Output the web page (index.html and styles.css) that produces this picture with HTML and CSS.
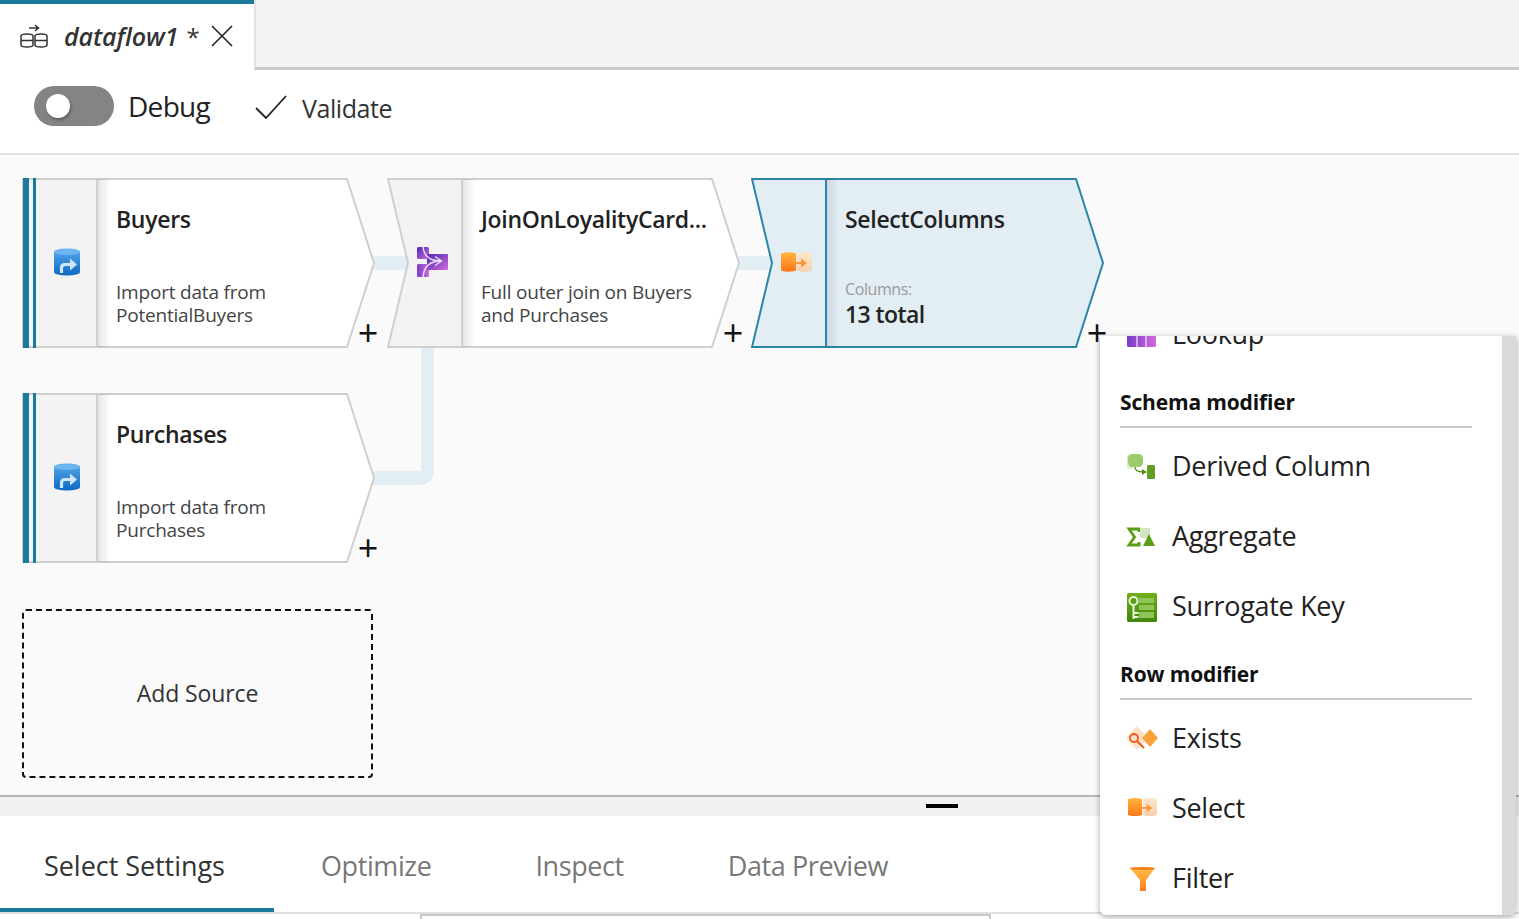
FILE: index.html
```html
<!DOCTYPE html>
<html lang="en">
<head>
  <meta charset="UTF-8">
  <title>dataflow1</title>
  <link rel="stylesheet" href="styles.css">
</head>
<body>
  <!-- shared icons -->
  <svg class="icon-defs" xmlns="http://www.w3.org/2000/svg">
    <defs>
      <linearGradient id="gBlue" x1="0" y1="0" x2="0" y2="1"><stop offset="0" stop-color="#5aa9ec"/><stop offset="1" stop-color="#0b69c2"/></linearGradient>
      <linearGradient id="gPurple" x1="0" y1="0" x2="1" y2="1"><stop offset="0" stop-color="#4f2ab0"/><stop offset="1" stop-color="#cf6adb"/></linearGradient>
      <linearGradient id="gPurple2" x1="0" y1="0" x2="1" y2="0"><stop offset="0" stop-color="#7a3cc8"/><stop offset="1" stop-color="#cf6adb"/></linearGradient>
      <linearGradient id="gOrange" x1="0" y1="0" x2="0" y2="1"><stop offset="0" stop-color="#ffb63f"/><stop offset="1" stop-color="#ff7518"/></linearGradient>
      <linearGradient id="gPale" x1="0" y1="0" x2="0" y2="1"><stop offset="0" stop-color="#fbe8c8"/><stop offset="1" stop-color="#f9cfae"/></linearGradient>
      <linearGradient id="gGreen" x1="0" y1="0" x2="0" y2="1"><stop offset="0" stop-color="#6fb01c"/><stop offset="1" stop-color="#3f8708"/></linearGradient>
      <linearGradient id="gFunnel" x1="0" y1="0" x2="0" y2="1"><stop offset="0" stop-color="#ffc04a"/><stop offset="1" stop-color="#ff7a1c"/></linearGradient>
    </defs>
    <symbol id="i-source" viewBox="0 0 26 28">
      <path d="M0 4a13 3.600 0 0 1 26 0v20a13 3.600 0 0 1-26 0z" fill="url(#gBlue)"/>
      <ellipse cx="13" cy="4" rx="13" ry="3" fill="#6db6f0"/>
      <path d="M7.500 25v-5q0-3.500 3.500-3.500h6" fill="none" stroke="#cfe6f8" stroke-width="3.200"/>
      <path d="M16 10.500l7 6-7 6z" fill="#cfe6f8"/>
    </symbol>
    <symbol id="i-join" viewBox="0 0 32 30">
      <rect x="1" y="0" width="12" height="12" rx="1.500" fill="url(#gPurple)"/>
      <rect x="1" y="17" width="12" height="13" rx="1.500" fill="url(#gPurple2)"/>
      <rect x="11" y="7" width="21" height="16" rx="1" fill="url(#gPurple)"/>
      <path d="M7 0C8 9 14 14 25 14M7 30C8 19 14 14 25 14M19 9.500l6.500 4.500-6.500 4.500" fill="none" stroke="#eadcf7" stroke-width="1.500"/>
    </symbol>
    <symbol id="i-select" viewBox="0 0 31 20">
      <path d="M16 1.500q7-2.500 15 0v17q-7.500 2.500-15 0z" fill="url(#gPale)"/>
      <path d="M0 1.500q7.500-2.500 15 0v17q-7.500 2.500-15 0z" fill="url(#gOrange)"/>
      <path d="M13 11h8" stroke="#f79a3e" stroke-width="2"/>
      <path d="M20 6.500l6 4.500-6 4.500z" fill="#f79a3e"/>
    </symbol>
  </svg>

  <div class="tabstrip">
    <div class="doc-tab">
      <svg class="doc-icon" viewBox="0 0 28 24" xmlns="http://www.w3.org/2000/svg">
        <g fill="none" stroke="#333" stroke-width="1.500">
          <path d="M9 4h9M15 1l3.500 3-3.500 3"/>
          <path d="M1 12q0-2 6-2t6 2v9q0 2-6 2t-6-2zM1 16.500h12"/>
          <path d="M15 12q0-2 6-2t6 2v9q0 2-6 2t-6-2zM15 16.500h12"/>
        </g>
      </svg>
      <span class="doc-name">dataflow1</span>
      <span class="doc-dirty">*</span>
      <svg class="doc-close" viewBox="0 0 22 22" xmlns="http://www.w3.org/2000/svg">
        <path d="M1 1l20 20M21 1L1 21" stroke="#222" stroke-width="1.600" fill="none"/>
      </svg>
    </div>
    <div class="tab-rest"></div>
  </div>

  <div class="toolbar">
    <div class="toggle"><span class="knob"></span></div>
    <span class="debug-label">Debug</span>
    <svg class="check" viewBox="0 0 32 24" xmlns="http://www.w3.org/2000/svg">
      <path d="M1 13l10 10L31 1" fill="none" stroke="#222" stroke-width="1.800"/>
    </svg>
    <span class="validate-label">Validate</span>
  </div>

  <div class="canvas">
    <div class="link link-a"></div>
    <div class="link link-b"></div>
    <div class="link-down"></div>

    <div class="node node-buyers">
      <svg class="node-shape" viewBox="0 0 354 172" xmlns="http://www.w3.org/2000/svg">
        <path d="M1 2H75V170H1z" fill="#f3f3f3"/>
        <path d="M75 2H325L352 86 325 170H75z" fill="#fff"/>
        <path d="M1 2H325L352 86 325 170H1zM75 2V170" fill="none" stroke="#cfcfcf" stroke-width="2"/>
        <path d="M1 1h6v170H1zM11 1h3v170h-3z" fill="#1a7a9e"/>
      </svg>
      <div class="node-icon"><svg class="ic-source"><use href="#i-source"/></svg></div>
      <div class="node-body">
        <div class="node-title">Buyers</div>
        <div class="node-desc">Import data from<br>PotentialBuyers</div>
      </div>
      <span class="node-add">+</span>
    </div>

    <div class="node node-purchases">
      <svg class="node-shape" viewBox="0 0 354 172" xmlns="http://www.w3.org/2000/svg">
        <path d="M1 2H75V170H1z" fill="#f3f3f3"/>
        <path d="M75 2H325L352 86 325 170H75z" fill="#fff"/>
        <path d="M1 2H325L352 86 325 170H1zM75 2V170" fill="none" stroke="#cfcfcf" stroke-width="2"/>
        <path d="M1 1h6v170H1zM11 1h3v170h-3z" fill="#1a7a9e"/>
      </svg>
      <div class="node-icon"><svg class="ic-source"><use href="#i-source"/></svg></div>
      <div class="node-body">
        <div class="node-title">Purchases</div>
        <div class="node-desc">Import data from<br>Purchases</div>
      </div>
      <span class="node-add">+</span>
    </div>

    <div class="node node-join">
      <svg class="node-shape" viewBox="0 0 354 172" xmlns="http://www.w3.org/2000/svg">
        <path d="M1 2H75V170H1L21 86z" fill="#f3f3f3"/>
        <path d="M75 2H325L352 86 325 170H75z" fill="#fff"/>
        <path d="M1 2H325L352 86 325 170H1L21 86zM75 2V170" fill="none" stroke="#cfcfcf" stroke-width="2"/>
      </svg>
      <div class="node-icon"><svg class="ic-join"><use href="#i-join"/></svg></div>
      <div class="node-body">
        <div class="node-title">JoinOnLoyalityCard...</div>
        <div class="node-desc">Full outer join on Buyers<br>and Purchases</div>
      </div>
      <span class="node-add">+</span>
    </div>

    <div class="node node-selected">
      <svg class="node-shape" viewBox="0 0 354 172" xmlns="http://www.w3.org/2000/svg">
        <path d="M1 2H325L352 86 325 170H1L21 86z" fill="#e3eef4"/>
        <path d="M1 2H325L352 86 325 170H1L21 86zM75 2V170" fill="none" stroke="#2a86a8" stroke-width="2"/>
      </svg>
      <div class="node-icon"><svg class="ic-select"><use href="#i-select"/></svg></div>
      <div class="node-body">
        <div class="node-title">SelectColumns</div>
        <div class="node-sub">Columns:</div>
        <div class="node-total">13 total</div>
      </div>
      <span class="node-add">+</span>
    </div>

    <div class="add-source">Add Source</div>
  </div>

  <div class="splitter"><span class="grip"></span></div>

  <div class="bottom-tabs">
    <div class="btab active">Select Settings</div>
    <div class="btab">Optimize</div>
    <div class="btab">Inspect</div>
    <div class="btab">Data Preview</div>
  </div>
  <div class="bottom-pane"><div class="pane-box"></div></div>

  <!-- transformation picker, scrolled part way down -->
  <div class="picker">
    <div class="picker-list">
      <div class="pick-row">
        <svg class="pick-icon" viewBox="0 0 32 32" xmlns="http://www.w3.org/2000/svg">
          <rect x="1" y="6" width="29" height="24" rx="1.500" fill="url(#gPurple2)"/>
          <path d="M11 6v24M20 6v24" stroke="#e6c8f2" stroke-width="1.500"/>
          <path d="M1 19l5-5v5z" fill="#fff"/>
        </svg>
        <span>Lookup</span>
      </div>
      <div class="pick-head">Schema modifier</div>
      <div class="pick-row">
        <svg class="pick-icon" viewBox="0 0 32 32" xmlns="http://www.w3.org/2000/svg">
          <rect x="1" y="6" width="6" height="14" rx="3" fill="#d9e8c6"/>
          <rect x="2" y="5" width="15" height="13" rx="4.500" fill="#9ccb6a"/>
          <path d="M9 18q0 5 8 5" fill="none" stroke="#4f8f1a" stroke-width="1.300"/>
          <path d="M16 20l5 3-5 3z" fill="#4f8f1a"/>
          <rect x="21" y="16" width="8" height="14" rx="1.500" fill="#5f9f22"/>
        </svg>
        <span>Derived Column</span>
      </div>
      <div class="pick-row">
        <svg class="pick-icon" viewBox="0 0 32 32" xmlns="http://www.w3.org/2000/svg">
          <path d="M13 13V10H3l5.500 8L3 26h10v-3" fill="none" stroke="#5a9e14" stroke-width="2.800"/>
          <rect x="14" y="9" width="10" height="10" fill="#d3e6bd"/>
          <path d="M23 15l6 12H17z" fill="#5a9e14"/>
        </svg>
        <span>Aggregate</span>
      </div>
      <div class="pick-row">
        <svg class="pick-icon" viewBox="0 0 32 32" xmlns="http://www.w3.org/2000/svg">
          <rect x="1" y="4" width="30" height="29" rx="1.500" fill="url(#gGreen)"/>
          <path d="M13 9h15v5H13zM13 16h15v5H13zM13 23h15v6H13z" fill="#8fc45a"/>
          <circle cx="7.500" cy="12" r="4" fill="#5a9e14" stroke="#e8f3d8" stroke-width="2"/>
          <path d="M7.500 16v14M7.500 24h5M7.500 28h5" stroke="#e8f3d8" stroke-width="2" fill="none"/>
        </svg>
        <span>Surrogate Key</span>
      </div>
      <div class="pick-head">Row modifier</div>
      <div class="pick-row">
        <svg class="pick-icon" viewBox="0 0 32 32" xmlns="http://www.w3.org/2000/svg">
          <path d="M11 5l11 12-11 12L0 17z" fill="#fde0c8"/>
          <path d="M24 8l8 9-8 9-8-9z" fill="#f9a13a"/>
          <circle cx="8" cy="17" r="4" fill="none" stroke="#f0581c" stroke-width="1.800"/>
          <path d="M11 20l7 7" stroke="#f0581c" stroke-width="2"/>
        </svg>
        <span>Exists</span>
      </div>
      <div class="pick-row">
        <svg class="pick-icon" viewBox="0 0 32 32" xmlns="http://www.w3.org/2000/svg">
          <use href="#i-select" x="2" y="6" width="29" height="20"/>
        </svg>
        <span>Select</span>
      </div>
      <div class="pick-row">
        <svg class="pick-icon" viewBox="0 0 32 32" xmlns="http://www.w3.org/2000/svg">
          <path d="M4 7h25l-9 12v11h-6V19z" fill="url(#gFunnel)"/>
          <ellipse cx="16.500" cy="7.500" rx="12.500" ry="1.600" fill="#f5821f"/>
        </svg>
        <span>Filter</span>
      </div>
    </div>
    <div class="picker-scroll"></div>
  </div>
</body>
</html>
```

FILE: styles.css
```css
* {
  margin: 0;
  padding: 0;
  box-sizing: border-box;
}

html, body {
  height: 100%;
  overflow: hidden;
}

body {
  position: relative;
  font-family: "Open Sans", "Noto Sans", sans-serif;
  background: #fff;
  color: #222;
}

.icon-defs {
  position: absolute;
  width: 0;
  height: 0;
}

/* Document tab */
.tabstrip {
  display: flex;
  height: 70px;
  background: #f3f3f3;
}

.doc-tab {
  width: 254px;
  height: 70px;
  display: flex;
  align-items: center;
  padding: 0 0 2px 20px;
  background: #fff;
  border-top: 4px solid #1a7a9e;
}

.doc-icon {
  width: 28px;
  height: 24px;
}

.doc-name {
  margin-left: 16px;
  font-size: 25px;
  font-weight: 600;
  font-style: italic;
  letter-spacing: -0.1px;
  color: #333;
}

.doc-dirty {
  margin-left: 8px;
  font-size: 24px;
  color: #333;
}

.doc-close {
  width: 22px;
  height: 22px;
  margin-left: 11px;
}

.tab-rest {
  flex: 1;
  border-left: 2px solid #e2e2e2;
  border-bottom: 3px solid #c9c9c9;
}

/* Toolbar */
.toolbar {
  height: 85px;
  display: flex;
  align-items: center;
  padding: 0 0 12px 34px;
  background: #fff;
  border-bottom: 2px solid #e0e0e0;
}

.toggle {
  width: 80px;
  height: 40px;
  display: flex;
  align-items: center;
  padding-left: 12px;
  border-radius: 20px;
  background: #848484;
}

.knob {
  width: 24px;
  height: 24px;
  border-radius: 50%;
  background: #fff;
  box-shadow: 1px 2px 3px rgba(0, 0, 0, 0.3);
}

.debug-label {
  margin-left: 14px;
  font-size: 28px;
  letter-spacing: -0.7px;
  color: #222;
}

.check {
  width: 32px;
  height: 24px;
  margin: 3px 0 0 45px;
}

.validate-label {
  margin: 4px 0 0 15px;
  font-size: 25px;
  letter-spacing: -0.45px;
  color: #333;
}

/* Canvas */
.canvas {
  position: relative;
  height: 642px;
  background: #fafafa;
  border-bottom: 2px solid #b5b5b5;
}

.link {
  position: absolute;
  top: 101px;
  height: 14px;
  background: #e3eef4;
}

.link-a {
  left: 370px;
  width: 40px;
}

.link-b {
  left: 735px;
  width: 40px;
}

.link-down {
  position: absolute;
  left: 370px;
  top: 190px;
  width: 64px;
  height: 140px;
  border-right: 13px solid #e3eef4;
  border-bottom: 14px solid #e3eef4;
  border-bottom-right-radius: 14px;
}

.node {
  position: absolute;
  width: 354px;
  height: 172px;
  display: flex;
}

.node-buyers { left: 22px; top: 22px; }
.node-purchases { left: 22px; top: 237px; }
.node-join { left: 387px; top: 22px; }
.node-selected { left: 751px; top: 22px; }

.node-shape {
  position: absolute;
  left: 0;
  top: 0;
  width: 354px;
  height: 172px;
}

.node-icon {
  position: relative;
  width: 76px;
  height: 170px;
  flex-shrink: 0;
  display: flex;
  align-items: center;
  justify-content: center;
  padding-left: 14px;
}

.ic-source {
  width: 26px;
  height: 28px;
}

.ic-join {
  width: 32px;
  height: 30px;
}

.ic-select {
  width: 31px;
  height: 20px;
}

.node-body {
  position: relative;
  flex: 1;
  height: 168px;
  margin-top: 2px;
  padding: 24px 0 0 18px;
  background: linear-gradient(to right, rgba(0, 0, 0, 0.1), rgba(0, 0, 0, 0) 12px) no-repeat left top / 14px 100%;
}

.node-title {
  height: 32px;
  font-size: 23px;
  font-weight: 600;
  line-height: 32px;
  letter-spacing: -0.3px;
  color: #222;
  white-space: nowrap;
}

.node-desc {
  margin-top: 46px;
  font-size: 19px;
  line-height: 23px;
  letter-spacing: -0.2px;
  color: #444;
  white-space: nowrap;
}

.node-sub {
  margin-top: 43px;
  font-size: 16px;
  line-height: 22px;
  letter-spacing: -0.4px;
  color: #999;
}

.node-total {
  font-size: 23px;
  font-weight: 600;
  line-height: 28px;
  letter-spacing: -0.6px;
  color: #222;
}

.node-add {
  position: absolute;
  left: 334px;
  top: 139px;
  z-index: 10;
  width: 24px;
  text-align: center;
  font-size: 36px;
  line-height: 34px;
  color: #111;
}

.add-source {
  position: absolute;
  left: 22px;
  top: 454px;
  width: 351px;
  height: 169px;
  display: flex;
  align-items: center;
  justify-content: center;
  padding-bottom: 2px;
  border: 2px dashed #111;
  border-radius: 4px;
  font-size: 23px;
  letter-spacing: -0.1px;
  color: #333;
}

/* Splitter + bottom tabs */
.splitter {
  height: 19px;
  display: flex;
  padding: 7px 0 0 926px;
  background: #f1f1f1;
}

.grip {
  width: 32px;
  height: 4px;
  background: #000;
}

.bottom-tabs {
  height: 98px;
  display: flex;
  border-bottom: 2px solid #e0e0e0;
  background: #fff;
}

.btab {
  height: 96px;
  padding: 2px 57px 0 47px;
  display: flex;
  align-items: center;
  font-size: 27px;
  letter-spacing: -0.4px;
  color: #777;
}

.btab.active {
  width: 274px;
  padding: 6px 0 0 44px;
  letter-spacing: -0.05px;
  color: #333;
  border-bottom: 4px solid #1a7a9e;
}

.bottom-pane {
  padding-left: 420px;
}

.pane-box {
  width: 571px;
  height: 10px;
  border: 2px solid #c8c8c8;
}

/* Transformation picker */
.picker {
  position: absolute;
  left: 1100px;
  top: 336px;
  z-index: 5;
  width: 416px;
  height: 579px;
  display: flex;
  overflow: hidden;
  background: #fff;
  border-radius: 0 0 6px 6px;
  box-shadow: 0 2px 6px rgba(0, 0, 0, 0.35);
}

.picker-list {
  width: 402px;
  padding: 0 30px 0 20px;
  margin-top: -38px;
}

.picker-scroll {
  width: 14px;
  background: #dadada;
}

.pick-row {
  height: 70px;
  display: flex;
  align-items: center;
  gap: 14px;
  padding-left: 6px;
  font-size: 27px;
  letter-spacing: -0.3px;
  color: #222;
}

.pick-icon {
  width: 32px;
  height: 32px;
  overflow: visible;
  flex-shrink: 0;
}

.pick-head {
  height: 60px;
  padding-top: 18px;
  margin-bottom: 2px;
  border-bottom: 2px solid #c8c8c8;
  font-size: 21px;
  font-weight: 700;
  line-height: 32px;
  letter-spacing: -0.15px;
  color: #111;
}
```
